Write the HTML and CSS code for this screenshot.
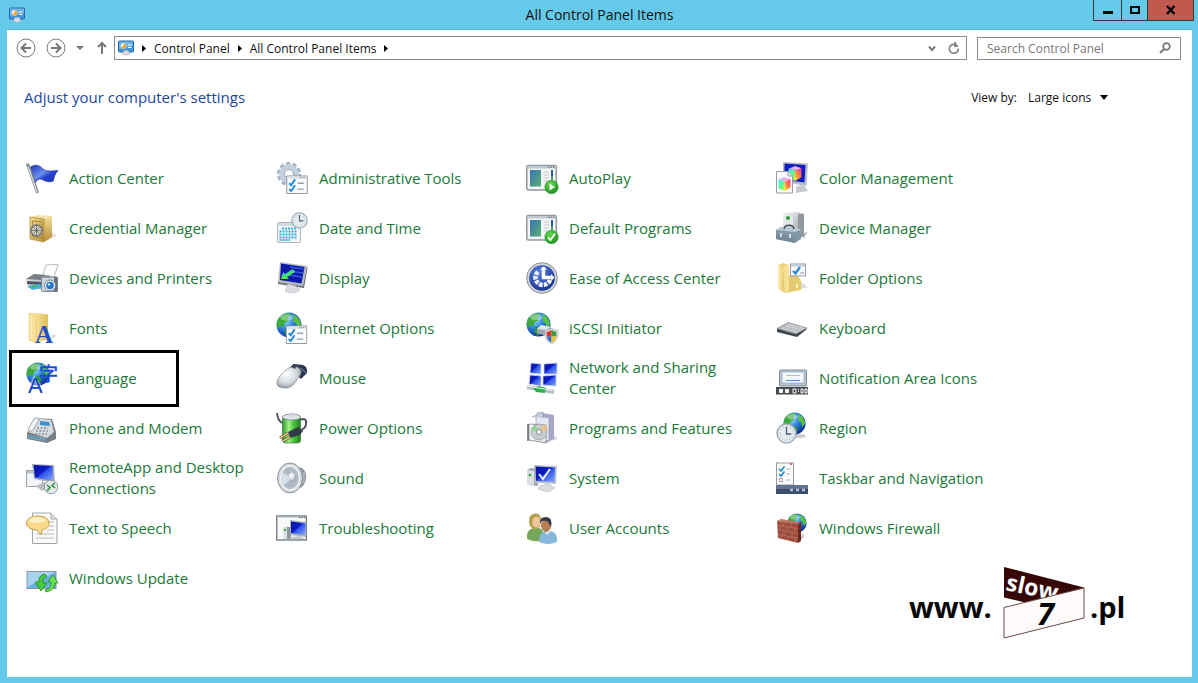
FILE: index.html
```html
<!DOCTYPE html>
<html lang="en">
<head>
<meta charset="utf-8">
<meta name="viewport" content="width=device-width, initial-scale=1">
<title>All Control Panel Items</title>
<link rel="stylesheet" href="styles.css">
</head>
<body>
<svg class="defs" aria-hidden="true">
  <defs>
    <linearGradient id="screen" x1="0" y1="0" x2="1" y2="1"><stop offset="0" stop-color="#0a159c"/><stop offset=".45" stop-color="#0b1cc4"/><stop offset=".5" stop-color="#2c50ea"/><stop offset="1" stop-color="#86a8f8"/></linearGradient>
    <linearGradient id="steel" x1="0" y1="0" x2="1" y2="1"><stop offset="0" stop-color="#f4f6f8"/><stop offset=".5" stop-color="#c3c8ce"/><stop offset="1" stop-color="#7f868e"/></linearGradient>
    <linearGradient id="gold" x1="0" y1="0" x2="1" y2="1"><stop offset="0" stop-color="#f3dc90"/><stop offset="1" stop-color="#b98e32"/></linearGradient>
    <linearGradient id="brass" x1="0" y1="0" x2="0" y2="1"><stop offset="0" stop-color="#f3dc96"/><stop offset="1" stop-color="#b58f3a"/></linearGradient>
    <linearGradient id="manila" x1="0" y1="0" x2="1" y2="0"><stop offset="0" stop-color="#fff0b0"/><stop offset="1" stop-color="#dfc05e"/></linearGradient>
    <linearGradient id="photo" x1="0" y1="0" x2="1" y2="1"><stop offset="0" stop-color="#3b74b4"/><stop offset="1" stop-color="#58b070"/></linearGradient>
    <linearGradient id="flag" x1="0" y1="0" x2="1" y2="1"><stop offset="0" stop-color="#1f37b4"/><stop offset=".45" stop-color="#6d8df0"/><stop offset=".6" stop-color="#2543d2"/><stop offset="1" stop-color="#1c2fa4"/></linearGradient>
    <linearGradient id="cubetop" x1="0" y1="0" x2="1" y2="0"><stop offset="0" stop-color="#c8a0ff"/><stop offset="1" stop-color="#ffc0d8"/></linearGradient>
    <linearGradient id="cubeleft" x1="0" y1="0" x2="1" y2="1"><stop offset="0" stop-color="#40f0ff"/><stop offset=".5" stop-color="#60f890"/><stop offset="1" stop-color="#c8ff30"/></linearGradient>
    <linearGradient id="cuberight" x1="1" y1="0" x2="0" y2="1"><stop offset="0" stop-color="#ff30c0"/><stop offset=".5" stop-color="#ff8040"/><stop offset="1" stop-color="#fff030"/></linearGradient>
    <linearGradient id="cell" x1="0" y1="0" x2="1" y2="0"><stop offset="0" stop-color="#2f9a2c"/><stop offset=".35" stop-color="#a4f08c"/><stop offset=".6" stop-color="#4cc83c"/><stop offset="1" stop-color="#1f7c20"/></linearGradient>
    <radialGradient id="sea" cx=".35" cy=".3" r=".75"><stop offset="0" stop-color="#a8e4ff"/><stop offset=".45" stop-color="#2f86e0"/><stop offset="1" stop-color="#0b2a90"/></radialGradient>
    <radialGradient id="ball" cx=".4" cy=".3" r=".8"><stop offset="0" stop-color="#66d84a"/><stop offset="1" stop-color="#128a1a"/></radialGradient>
    <radialGradient id="navy" cx=".4" cy=".3" r=".8"><stop offset="0" stop-color="#5a80e0"/><stop offset="1" stop-color="#102a88"/></radialGradient>
    <radialGradient id="pearl" cx=".4" cy=".35" r=".7"><stop offset="0" stop-color="#ffffff"/><stop offset=".6" stop-color="#d4d8de"/><stop offset="1" stop-color="#8e949c"/></radialGradient>
    <symbol id="globe" viewBox="0 0 24 24">
      <circle cx="12" cy="12" r="11.5" fill="url(#sea)"/>
      <path d="M3 5C6 2 9 1 12 1L14 3 11 5 12 8 8 10 7 14 4 13 1 15C0 11 1 7 3 5Z" fill="#3faa3c"/>
      <path d="M16 2C20 4 23 8 23 12L20 16 19 11 16 9Z" fill="#55c444"/>
      <path d="M9 14L14 15 15 19 11 23 8 19Z" fill="#2f9638"/>
      <ellipse cx="10" cy="5" rx="6" ry="3" fill="#fff" opacity=".35"/>
    </symbol>
    <symbol id="checklist" viewBox="0 0 22 20">
      <path d="M.5 1.5H21.5V19.5H.5Z" fill="#fbfcfd" stroke="#8f959b"/><path d="M1 2H21V4.500H1Z" fill="#dfe3e8"/>
      <path d="M14 3H20" stroke="#737a84" stroke-dasharray="1 1"/>
      <path d="M11.500 9H18M11.500 15H18" stroke="#9aa2ae" stroke-width="1.500"/>
      <path d="M3 9L5 11 9 5M3 15L5 17 9 11" fill="none" stroke="#2489d0" stroke-width="2"/>
    </symbol>
    <symbol id="appwin" viewBox="0 0 32 32">
      <rect x=".8" y="3.500" width="29.500" height="24.500" rx="1.500" fill="#f4f6f7" stroke="#8f979f" stroke-width="1.500"/>
      <path d="M1.500 4H30V6.500H1.500Z" fill="#c2c9d1"/><path d="M22 5.200H29" stroke="#5b6470" stroke-dasharray="1.500 1"/>
      <rect x="4" y="8" width="11" height="16.500" fill="url(#photo)"/>
      <path d="M17.500 10H23M17.500 13H23M17.500 16H23M17.500 19H23" stroke="#c4c8cc"/>
      <path d="M26 8V18" stroke="#275bb0" stroke-width="2"/><path d="M26 14V18" stroke="#47a070" stroke-width="2"/>
    </symbol>
    <symbol id="clock" viewBox="0 0 20 20">
      <circle cx="10" cy="10" r="9" fill="#e6ebf0" stroke="#a4adb6" stroke-width="1.500"/>
      <circle cx="10" cy="10" r="6.500" fill="none" stroke="#9ba4ad" stroke-dasharray=".8 2.600"/>
      <path d="M10 3.500V10.500H14.500" fill="none" stroke="#4b5f78" stroke-width="1.300"/>
    </symbol>
    <symbol id="cube" viewBox="0 0 12 14">
      <path d="M0 2.500L6 0 12 2 6 4.500Z" fill="url(#cubetop)"/>
      <path d="M0 2.500L6 4.500V14L0 11.500Z" fill="url(#cubeleft)"/>
      <path d="M6 4.500L12 2V10.500L6 14Z" fill="url(#cuberight)"/>
    </symbol>
    <symbol id="cpl" viewBox="0 0 16 16">
      <rect x=".5" y="1" width="15" height="11" rx="1" fill="#4297dc" stroke="#2464a6"/>
      <path d="M1 1.500H15V6L1 9Z" fill="#8fcbf3" opacity=".55"/>
      <circle cx="5.500" cy="6" r="2.700" fill="#fff"/><path d="M5.500 6V3.300A2.700 2.700 0 1 1 3 7Z" fill="#f6a623"/>
      <path d="M10 5H13.500M10 7.500H13.500" stroke="#fff"/>
      <path d="M6 10.500H10L12 14Q8 16.500 4.500 14Z" fill="#d8dde2" stroke="#a2a9b0" stroke-width=".5"/>
    </symbol>
  </defs>
</svg>

<div class="window">
  <header class="titlebar">
    <svg class="app-icon" aria-hidden="true"><use href="#cpl"/></svg>
    <h1 class="window-title">All Control Panel Items</h1>
    <div class="window-controls">
      <button class="ctl ctl-min" type="button" aria-label="Minimize"><svg width="12" height="12" viewBox="0 0 12 12"><path d="M1 8.500H11" stroke="#000" stroke-width="3"/></svg></button>
      <button class="ctl ctl-max" type="button" aria-label="Maximize"><svg width="12" height="12" viewBox="0 0 12 12"><path d="M2 3H10V9H2Z" fill="none" stroke="#000" stroke-width="2"/></svg></button>
      <button class="ctl ctl-close" type="button" aria-label="Close"><svg width="12" height="12" viewBox="0 0 12 12"><path d="M2 2L9.500 10M9.500 2L2 10" stroke="#000" stroke-width="2.400"/></svg></button>
    </div>
  </header>

  <main class="pane">
    <div class="toolbar">
      <button class="round" type="button" aria-label="Back"><svg width="20" height="20" viewBox="0 0 20 20"><circle cx="10" cy="10" r="9" fill="none" stroke="#777"/><path d="M15 10H6M10 5.500L5.500 10 10 14.500" fill="none" stroke="#777" stroke-width="2"/></svg></button>
      <button class="round" type="button" aria-label="Forward"><svg width="20" height="20" viewBox="0 0 20 20"><circle cx="10" cy="10" r="9" fill="none" stroke="#777"/><path d="M5 10H14M10 5.500L14.500 10 10 14.500" fill="none" stroke="#777" stroke-width="2"/></svg></button>
      <button class="recent" type="button" aria-label="Recent locations"><svg width="8" height="4" viewBox="0 0 8 4"><path d="M0 0H8L4 4Z" fill="#777"/></svg></button>
      <button class="up" type="button" aria-label="Up"><svg width="10" height="14" viewBox="0 0 10 14"><path d="M5 13V2M1 6L5 2 9 6" fill="none" stroke="#777" stroke-width="2"/></svg></button>
      <div class="address">
        <svg class="app-icon" aria-hidden="true"><use href="#cpl"/></svg>
        <nav class="crumbs" aria-label="Location">
          <svg class="tri" viewBox="0 0 4 7" aria-hidden="true"><path d="M0 0L4 3.500 0 7Z"/></svg>
          <a href="#">Control Panel</a>
          <svg class="tri" viewBox="0 0 4 7" aria-hidden="true"><path d="M0 0L4 3.500 0 7Z"/></svg>
          <a href="#">All Control Panel Items</a>
          <svg class="tri" viewBox="0 0 4 7" aria-hidden="true"><path d="M0 0L4 3.500 0 7Z"/></svg>
        </nav>
        <button type="button" aria-label="Previous locations"><svg width="8" height="8" viewBox="0 0 8 8"><path d="M1 2.500L4 6 7 2.500" fill="none" stroke="#777" stroke-width="2"/></svg></button>
        <button type="button" aria-label="Refresh"><svg width="12" height="12" viewBox="0 0 12 12"><path d="M10.300 6.500A4.500 4.500 0 1 1 7 2.500" fill="none" stroke="#858585" stroke-width="1.700"/><path d="M6 0H7.500L10.500 5H6Z" fill="#858585"/></svg></button>
      </div>
      <div class="search">
        <input type="search" placeholder="Search Control Panel" aria-label="Search Control Panel">
        <svg width="12" height="12" viewBox="0 0 12 12" aria-hidden="true"><circle cx="7.500" cy="4.500" r="3.300" fill="none" stroke="#777" stroke-width="1.700"/><path d="M5 7L1 11" stroke="#777" stroke-width="2"/></svg>
      </div>
    </div>

    <div class="heading">
      <h2>Adjust your computer's settings</h2>
      <div class="view-by">
        <label for="view">View by:</label>
        <span class="picker">
          <select id="view"><option>Large icons</option></select>
          <svg width="8" height="5" viewBox="0 0 8 5" aria-hidden="true"><path d="M0 0H8L4 5Z"/></svg>
        </span>
      </div>
    </div>

    <ul class="items">
      <li><a href="#"><svg viewBox="0 0 32 32" aria-hidden="true"><path d="M4.500 5C9 2 13 3 16 6 20 10 25 9 32 8.500 29 12 28 15 27.500 19 22 21 19 19 16 17.500 13 16 11 18 9 21Z" fill="url(#flag)" stroke="#1a2b90" stroke-width=".6"/><path d="M2 3L11.500 31" stroke="#777d84" stroke-width="3"/><path d="M1.800 3L11 30.500" stroke="#dde0e3" stroke-width="1.300"/><circle cx="1.800" cy="3" r="1.700" fill="#8a9097"/></svg><span>Action Center</span></a></li>
      <li><a href="#"><svg viewBox="0 0 32 32" aria-hidden="true"><circle cx="13" cy="12" r="10.300" fill="none" stroke="#9fb0c2" stroke-width="3.500" stroke-dasharray="4 2.480"/><circle cx="13" cy="12" r="7.500" fill="none" stroke="#c2cfdd" stroke-width="5"/><circle cx="13" cy="12" r="4.500" fill="#fff" stroke="#8b9cb0"/><use href="#checklist" x="10" y="12.500" width="22" height="19.500"/></svg><span>Administrative Tools</span></a></li>
      <li><a href="#"><svg viewBox="0 0 32 32" aria-hidden="true"><use href="#appwin" width="32" height="32"/><circle cx="25.500" cy="25" r="6.700" fill="url(#ball)" stroke="#37923a" stroke-width=".6"/><path d="M23.500 21.500L29 25 23.500 28.500Z" fill="#fff"/></svg><span>AutoPlay</span></a></li>
      <li><a href="#"><svg viewBox="0 0 32 32" aria-hidden="true"><path d="M7 0L32 1.500 30.500 24 7 20Z" fill="#b9bec6"/><path d="M8.500 1.500L29.500 3 28.500 20.500 8.500 18Z" fill="#0e1cc0"/><path d="M20 25L27 22 32 29 20 31Z" fill="#c8ccd1"/><use href="#cube" x="12" y="4" width="14" height="15"/><path d="M.5 9.500H12L16.500 14V31H.5Z" fill="#fbfbfd" stroke="#989ca4"/><path d="M12 9.500V14H16.500" fill="#dfe1e6" stroke="#989ca4"/><use href="#cube" x="2" y="15" width="13" height="14"/></svg><span>Color Management</span></a></li>

      <li><a href="#"><svg viewBox="0 0 32 32" aria-hidden="true"><path d="M20 29L31 24 26 20Z" fill="#ddd"/><path d="M4 5L12 3 26 4 18 7Z" fill="#f6e4a8"/><path d="M18 7L26 4V25L18 30Z" fill="url(#brass)"/><path d="M4 5L18 7V30L4 27Z" fill="url(#gold)" stroke="#a98638" stroke-width=".7"/><path d="M6.500 9L16 10V26L6.500 24.500Z" fill="none" stroke="#ae8c40"/><circle cx="10.500" cy="18.500" r="5.500" fill="#d6d3c8" stroke="#7f7e7a" stroke-width="1.800"/><path d="M10.500 14V23M6 18.500H15M7.500 15.500L13.500 21.500M13.500 15.500L7.500 21.500" stroke="#77746c" stroke-width=".9"/></svg><span>Credential Manager</span></a></li>
      <li><a href="#"><svg viewBox="0 0 32 32" aria-hidden="true"><rect x="1.500" y="10.500" width="23" height="20" rx="1" fill="#f4f7f9" stroke="#aab2ba"/><path d="M2 11H24V14H2Z" fill="#d3dae1"/><path d="M6 16.500H21M3.500 19.500H21M3.500 22.500H21M3.500 25.500H21M3.500 28H14" stroke="#38add6" stroke-width="2" stroke-dasharray="2 1"/><use href="#clock" x="15" y="0" width="17" height="17"/></svg><span>Date and Time</span></a></li>
      <li><a href="#"><svg viewBox="0 0 32 32" aria-hidden="true"><use href="#appwin" width="32" height="32"/><circle cx="25.500" cy="25" r="6.700" fill="url(#ball)" stroke="#37923a" stroke-width=".6"/><path d="M22 25.500L24.500 28 29 21.500" fill="none" stroke="#fff" stroke-width="1.800"/></svg><span>Default Programs</span></a></li>
      <li><a href="#"><svg viewBox="0 0 32 32" aria-hidden="true"><path d="M24 24L32 19 28 26Z" fill="#bbb"/><path d="M7 1L22 0 28 2V24L20 27 7 22Z" fill="url(#steel)"/><path d="M22 2L28 2V24L22 26Z" fill="#93999f"/><rect x="9" y="4" width="8" height="9" fill="#e4e7e9"/><circle cx="12" cy="6" r="2" fill="#2e9c3a"/><path d="M0 18L5 15H20L25 18V27L19 31 0 27Z" fill="#8398a6"/><path d="M0 18L5 15H20L25 18 19 20Z" fill="#b9c8d2"/><path d="M0 22L19 25V31L0 27Z" fill="#758b99"/><path d="M8 17C9 12 17 12 18 17" fill="none" stroke="#454f58" stroke-width="1.500"/><path d="M5 21V25M14 22V26" stroke="#e2e8ec" stroke-width="1.700"/></svg><span>Device Manager</span></a></li>

      <li><a href="#"><svg viewBox="0 0 32 32" aria-hidden="true"><path d="M17 13L20 3 32 2.500 28 15Z" fill="#fff" stroke="#a5a9ae" stroke-width=".8"/><path d="M0 17L8 12 20 13V27L2 26Z" fill="url(#steel)"/><path d="M0 17L8 12 20 13 15 18Z" fill="#767d85"/><path d="M1 19L15 20V23L1 22Z" fill="#4d545c"/><path d="M2 24L14 22 16 26 6 28Z" fill="#3fb0d8"/><path d="M4 25L10 23 11 26Z" fill="#4db860"/><rect x="15.500" y="15" width="16" height="14.500" rx="1.500" fill="#cfd5da" stroke="#7f8890"/><path d="M28 15H31.500V30H28Z" fill="#69727c"/><path d="M18 13.500H24V16H18Z" fill="#8b949c"/><circle cx="24" cy="23.500" r="5.500" fill="#e6ecf2" stroke="#7b8692"/><circle cx="24" cy="23.500" r="3.700" fill="#1d74cc"/><circle cx="23" cy="22.500" r="1.200" fill="#c2eaff"/></svg><span>Devices and Printers</span></a></li>
      <li><a href="#"><svg viewBox="0 0 32 32" aria-hidden="true"><path d="M4 0L31 4 27 24 2 20Z" fill="#b6bac0"/><path d="M5 1.500L28.500 5 25.500 21.500 4 18Z" fill="#0c18a8"/><path d="M14 5L27.500 7M13 9L27 11M12 13L26 15" stroke="#315ce0" stroke-width="1.500"/><path d="M2 20L27 24 31 4 31.500 6 28 26 2 22Z" fill="#6b717a"/><path d="M12 22L20 24 24 28Q17 33 9 29Z" fill="#d9dce0" stroke="#b4b8bd" stroke-width=".6"/><path d="M5 17L7 10 9 12 17 7 19 10 11 15 13 17Z" fill="#48e070"/></svg><span>Display</span></a></li>
      <li><a href="#"><svg viewBox="0 0 32 32" aria-hidden="true"><circle cx="16" cy="16" r="15.300" fill="#d0d3d8" stroke="#8a8f98"/><circle cx="16" cy="16" r="12.800" fill="url(#navy)"/><path d="M24 18A7.500 7.500 0 1 1 12 9.800" fill="none" stroke="#f2f6ff" stroke-width="4.500" stroke-dasharray="3.500 1.200"/><path d="M17.500 5V15.500M16 15.500H27" stroke="#fff" stroke-width="3.500"/><path d="M14 8L17.500 4.500 21 8ZM25 12L28.500 15.500 25 19Z" fill="#fff"/></svg><span>Ease of Access Center</span></a></li>
      <li><a href="#"><svg viewBox="0 0 32 32" aria-hidden="true"><path d="M14 30L32 25 25 20Z" fill="#ddd"/><path d="M2 3L8 1 13 4V29L2 27Z" fill="#ecd17c"/><path d="M12 14H21Q25 17 25 20V28L10 31Z" fill="#e6ca72"/><path d="M21 22V26" stroke="#fff4c0" stroke-width="2"/><path d="M2 3L7 5 9 31 2 27Z" fill="url(#manila)"/><path d="M7 5L13 2V28L9 31Z" fill="#f5e096"/><rect x="14.500" y="2" width="15" height="12" fill="#f8fafb" stroke="#929ba6"/><path d="M15 3.500H29" stroke="#c1cbd5" stroke-width="2"/><path d="M17 9L19.500 11.500 24 5" fill="none" stroke="#2489d0" stroke-width="2.200"/><path d="M24 11H28" stroke="#8b93a0"/></svg><span>Folder Options</span></a></li>

      <li><a href="#"><svg viewBox="0 0 32 32" aria-hidden="true"><path d="M3 1H10L22 2.500V27L10 31 3 28Z" fill="url(#manila)"/><path d="M3 1L10 5V31L3 28Z" fill="#f6e196" stroke="#d8bc66" stroke-width=".5"/><path d="M5 4V27" stroke="#fff" opacity=".6"/><path d="M24 28L31 24 27 22Z" fill="#ddd"/><text x="9" y="31" class="glyph-serif">A</text></svg><span>Fonts</span></a></li>
      <li><a href="#"><svg viewBox="0 0 32 32" aria-hidden="true"><use href="#globe" x="0" y="0" width="26" height="26"/><use href="#checklist" x="9.500" y="12.500" width="22" height="19.500"/></svg><span>Internet Options</span></a></li>
      <li><a href="#"><svg viewBox="0 0 32 32" aria-hidden="true"><use href="#globe" x="0" y="0" width="25" height="25"/><path d="M11 17L15 13 25 15V22L20 24 11 21Z" fill="#9ca6b0"/><path d="M11 17L15 13 25 15 20 18Z" fill="#e0e5e9"/><path d="M19 18.500Q23 18 25.500 16.500 28 18 32 18.500 33 28 25.500 32 18 28 19 18.500Z" fill="#e0e3e6" stroke="#9fa6ac" stroke-width=".7"/><path d="M20.500 20Q23 19.500 25.500 18V24.500H20.800Z" fill="#d8342a"/><path d="M25.500 18Q28 19.500 30.500 20L30.200 24.500H25.500Z" fill="#3b9e40"/><path d="M20.800 24.500H25.500V30.500Q21.500 28.500 20.800 24.500Z" fill="#2e6ccc"/><path d="M25.500 24.500H30.200Q29.500 28.500 25.500 30.500Z" fill="#f2c11c"/></svg><span>iSCSI Initiator</span></a></li>
      <li><a href="#"><svg viewBox="0 0 32 32" aria-hidden="true"><path d="M1 17L12 11 31 17 21 25 1 20Z" fill="#3f454c"/><path d="M1 16.500L12 10.500 31 16 20 22Z" fill="#b9bcc0" stroke="#85898e" stroke-width=".7"/><path d="M6 16L22 20M10 14L26 18M12 12.500L28 16.500" stroke="#e2e4e6" stroke-dasharray="2 1"/></svg><span>Keyboard</span></a></li>

      <li class="marked"><a href="#"><svg viewBox="0 0 32 32" aria-hidden="true"><use href="#globe" x="0" y="0" width="24" height="24"/><path d="M2 25L8 13 15 22V27Z" fill="#fff" opacity=".45"/><text x="13" y="19" class="glyph-cjk">字</text><text x="2" y="31" class="glyph-sans">A</text></svg><span>Language</span></a></li>
      <li><a href="#"><svg viewBox="0 0 32 32" aria-hidden="true"><path d="M13 6L18 2 27 3Q32 5 31 11L25 17Z" fill="#2f3754"/><path d="M25 6L30 11" stroke="#858ca6"/><path d="M1 20C2 14 10 7 15 5 20 3 28 7 24 13 20 19 17 26 10 26 5 26 0 25 1 20Z" fill="url(#pearl)" stroke="#858a92" stroke-width=".7"/><path d="M15 5L17 2 21 3 19 7Z" fill="#40465a"/></svg><span>Mouse</span></a></li>
      <li><a href="#"><svg viewBox="0 0 32 32" aria-hidden="true"><g fill="url(#screen)" stroke="#c9d2ee" stroke-width=".8"><path d="M5 1L15 2V12L4 11Z"/><path d="M18 2L31 1V12L18 12Z"/><path d="M4 13L15 14V24L3 22Z"/><path d="M17 14L30 13V24L17 23Z"/></g><path d="M1 25L28 30" stroke="#b7bfc4" stroke-width="4"/><path d="M7 26L13 24 20 26 19 31 10 30Z" fill="#2ead4d"/><path d="M1 24L26 28.500" stroke="#edf0f1" stroke-width="1.200"/></svg><span>Network and Sharing Center</span></a></li>
      <li><a href="#"><svg viewBox="0 0 32 32" aria-hidden="true"><rect x="3.500" y="8" width="27" height="16" rx="1" fill="#bac5cf" stroke="#828c96"/><rect x="6" y="10" width="22" height="11" fill="#f5f8fb" stroke="#74a0cc" stroke-width=".6"/><path d="M10 13.500H24" stroke="#b4bcc4"/><path d="M10 18.500H24" stroke="#4c90d8"/><path d="M0 25H32V32.500H0Z" fill="#474b51"/><path d="M3 27H7V31H3ZM9 27H13V31H9Z" fill="#f4f4f4"/><path d="M17 27H20V31H17ZM25 27H27V31H25ZM29 27H31V31H29Z" fill="none" stroke="#fff"/><path d="M22.500 27V31" stroke="#fff" stroke-dasharray="1 1"/></svg><span>Notification Area Icons</span></a></li>

      <li><a href="#"><svg viewBox="0 0 32 32" aria-hidden="true"><path d="M1 21L9 6 26 7 30 20V27L21 31 1 27Z" fill="#767e86"/><path d="M2 20L10 6 25 8 28 20 21 26Z" fill="#d7dbdf"/><path d="M14 9L23 10 24 14 14 13Z" fill="#3a92d4"/><path d="M11 16H22M10 19H22M9 22H21" stroke="#8b949d" stroke-width="1.500" stroke-dasharray="2 1.500"/><path d="M8 7Q12 4 13 8L7 18Q4 21 2 17Z" fill="#f2f3f5" stroke="#8b9299" stroke-width=".8"/><path d="M2 23L19 26V29L2 26Z" fill="#79b6d6"/><path d="M3 24.500L18 27.500" stroke="#3e5668" stroke-dasharray="1.500 1"/></svg><span>Phone and Modem</span></a></li>
      <li><a href="#"><svg viewBox="0 0 32 32" aria-hidden="true"><path d="M1 1Q2 10 7 11M24 8Q31 5 30 12 30 17 21 20" fill="none" stroke="#4d5468" stroke-width="2"/><rect x="6.500" y="4" width="18" height="27" rx="3" fill="url(#cell)" stroke="#397a3b" stroke-width=".7"/><ellipse cx="15.500" cy="5" rx="9" ry="3" fill="#e2e7ea" stroke="#89939b"/><ellipse cx="15.500" cy="2.500" rx="3.500" ry="2" fill="#cfd5da"/><path d="M12 20L22 15 27 19 24 23 14 26Z" fill="#343a46"/><path d="M12 21L4 26M14 25L7 29" stroke="#5d461e" stroke-width="2.700"/><path d="M12 21L4 26M14 25L7 29" stroke="#e5c98a" stroke-width="1.500"/></svg><span>Power Options</span></a></li>
      <li><a href="#"><svg viewBox="0 0 32 32" aria-hidden="true"><path d="M26 29L32 27 29 23Z" fill="#ddd"/><path d="M10 3L17 1 28 3V27L20 31 10 28Z" fill="#a6a8ca"/><path d="M10 3L23 6V29L10 27Z" fill="#e6e8f4" stroke="#9598b5" stroke-width=".7"/><path d="M6 5L11 3V1L17 0V6" fill="#c8cadd" stroke="#8c90a8" stroke-width=".6"/><path d="M3 12L20 13V31L3 28Z" fill="#f4f5f8" opacity=".85" stroke="#85888f"/><circle cx="13" cy="20" r="8" fill="#c9ccd2" stroke="#8b9096" stroke-width=".6"/><path d="M13 20L18 12A9 9 0 0 1 21 18Z" fill="#efc384"/><path d="M13 20L5 18A8 8 0 0 1 9 13Z" fill="#91d696"/><circle cx="13" cy="20" r="2.500" fill="#fff" stroke="#888"/><path d="M2 12V29" stroke="#63666b" stroke-width="1.500"/></svg><span>Programs and Features</span></a></li>
      <li><a href="#"><svg viewBox="0 0 32 32" aria-hidden="true"><ellipse cx="21" cy="24" rx="9" ry="2" fill="#ccc"/><use href="#globe" x="7" y="0" width="23" height="23"/><use href="#clock" x="0" y="11" width="21" height="21"/></svg><span>Region</span></a></li>

      <li><a href="#"><svg viewBox="0 0 32 32" aria-hidden="true"><rect x=".5" y="8.500" width="16" height="16" fill="#f3f4f5" stroke="#9ba1a7"/><path d="M1 9H16V11.500H1Z" fill="#b8c1cb"/><path d="M6 2L28 3 29 21 8 17Z" fill="#aab0b8"/><path d="M7.500 3L26.500 4 27 19 9 15.500Z" fill="url(#screen)"/><path d="M10 24L18 20 23 25 16 29Z" fill="#b9bdc2"/><circle cx="25" cy="25" r="6.800" fill="#e3e7e9" stroke="#92999f"/><path d="M21 23L24 25.500 21 29M29 21L26 23.500 29 26" fill="none" stroke="#2f9140" stroke-width="1.600"/></svg><span>RemoteApp and Desktop Connections</span></a></li>
      <li><a href="#"><svg viewBox="0 0 32 32" aria-hidden="true"><path d="M20 5L26 6Q31 10 30 16 30 21 26 25L19 28Z" fill="#8c939b"/><path d="M25 8V24M28 10V22" stroke="#c8ced4"/><ellipse cx="14" cy="16" rx="12.500" ry="15" fill="#d3d8dd" stroke="#8b939b"/><ellipse cx="14" cy="16" rx="9.500" ry="12" fill="#aebac6" stroke="#f0f2f4" stroke-width="1.500"/><path d="M6 10L16 16 7 24Q4 17 6 10Z" fill="#d7dfe6"/><ellipse cx="16" cy="15" rx="3.500" ry="4.500" fill="url(#pearl)"/></svg><span>Sound</span></a></li>
      <li><a href="#"><svg viewBox="0 0 32 32" aria-hidden="true"><path d="M1 8L5 6 12 7V24L3 23Z" fill="#9ea5ac"/><path d="M1 8L8 9V24L1 22Z" fill="#dce0e3"/><circle cx="4" cy="13" r="1.500" fill="#3cac46"/><path d="M8 3L31 4 30 22 9 21Z" fill="#bec4ca"/><path d="M9.500 4.500L29 5.500 28.500 20 10 19Z" fill="url(#screen)"/><path d="M14 24L22 22 29 26 22 30 12 27Z" fill="#dadde0" stroke="#b0b5ba" stroke-width=".6"/><path d="M13 12L17 17 24 7" fill="none" stroke="#e9f0ff" stroke-width="2"/></svg><span>System</span></a></li>
      <li><a href="#"><svg viewBox="0 0 32 32" aria-hidden="true"><rect x=".5" y="1" width="17" height="22" fill="#fbfbfc" stroke="#989da3"/><path d="M3 7L5 9 8.500 4.500M3 12L5 14 8.500 9.500" fill="none" stroke="#2489d0" stroke-width="1.700"/><rect x="3.500" y="16.500" width="3" height="3" fill="#fff" stroke="#aaa"/><path d="M10.500 7H14M10.500 12H14M10.500 18H14" stroke="#a6abb3"/><path d="M15 1V3" stroke="#d66" stroke-width="2"/><path d="M0 23H32V32H0Z" fill="#3b4c6c"/><path d="M0 23H32V27H0Z" fill="#607393"/><path d="M14 28H17M20 28H23M26 28H29" stroke="#b6c1d2" stroke-width="2.500"/></svg><span>Taskbar and Navigation</span></a></li>

      <li><a href="#"><svg viewBox="0 0 32 32" aria-hidden="true"><path d="M6.500 1H25L31 7V31.500H6.500Z" fill="#f9fafa" stroke="#a2a5a9"/><path d="M25 1V7H31" fill="#dfe2e5" stroke="#a2a5a9"/><path d="M21 10H28M23 14H28M21 18H28M10 22H28M10 26H28" stroke="#b7babd"/><path d="M12 4C19 4 23 7 23 11 23 15 20 17 16 18L15 23 11 18C5 18 .5 15 .5 11 .5 7 5 4 12 4Z" fill="#f9d98b" stroke="#c59a48"/><ellipse cx="11" cy="8" rx="8" ry="3" fill="#fff0c4"/></svg><span>Text to Speech</span></a></li>
      <li><a href="#"><svg viewBox="0 0 32 32" aria-hidden="true"><rect x=".8" y="4" width="29.500" height="24" fill="#f9fafa" stroke="#7e858c" stroke-width="1.500"/><path d="M1.500 5H29.500" stroke="#aeb5bd"/><path d="M23 5.500H29" stroke="#555" stroke-dasharray="1.500 1"/><path d="M7 15L11 14 15 16V27H7Z" fill="#dfe2e5"/><path d="M11 15H15V27H11Z" fill="#8e959c"/><circle cx="9" cy="18" r="1.300" fill="#41ae47"/><path d="M14 8L29.500 10V25L14 23Z" fill="#abb2bc"/><path d="M15 9.500L29.500 11.500V23L15 21Z" fill="url(#screen)"/><path d="M15 25L23 24 29 27H13Z" fill="#c3c7cb"/></svg><span>Troubleshooting</span></a></li>
      <li><a href="#"><svg viewBox="0 0 32 32" aria-hidden="true"><path d="M1 27Q0 18 7 16H13Q19 18 18 28 9 31 1 27Z" fill="#76a85c"/><path d="M4 14Q1 4 7 2 14 0 15 7L14 15 8 18Z" fill="#b3a04e"/><ellipse cx="10.500" cy="10" rx="4.200" ry="5.500" fill="#f0c49a"/><path d="M13 30Q13 21 19 19H25Q32 21 31 30 22 34 13 30Z" fill="#86b8dc"/><path d="M18 19L21 23 25 19Z" fill="#dcebf5"/><ellipse cx="20" cy="13.500" rx="5" ry="6.500" fill="#b77d53"/><path d="M14 12Q13 5 20 5 27 5 25 15L23 12Q22 8 16 9Z" fill="#383b44"/></svg><span>User Accounts</span></a></li>
      <li><a href="#"><svg viewBox="0 0 32 32" aria-hidden="true"><path d="M23 29L28 25 27 21Z" fill="#bbb"/><use href="#globe" x="11" y="1" width="20" height="20"/><path d="M1 9L5 7 25 10 21 12Z" fill="#bb7865"/><path d="M1 9L22 12V31L2 26Z" fill="#9e4c3c"/><path d="M22 12L25 10V29L22 31Z" fill="#692b21"/><path d="M1 13L22 16.500M1.500 17.500L22 21.500M2 22L22 26.500M7 10V14M15 11V15M4 14V18M11 15V19M19 16V20M8 19V23M16 21V25M5 23V27M12 24V28M19 26V30" stroke="#c08474" stroke-width=".6"/></svg><span>Windows Firewall</span></a></li>

      <li><a href="#"><svg viewBox="0 0 32 32" aria-hidden="true"><rect x="1" y="9.500" width="29" height="17" fill="#6aaedb" stroke="#87949f"/><path d="M1.500 10H29L1.500 25Z" fill="#a7d3ee"/><path d="M18 12Q12 14 13 20H9L15 29 21 21H17Q16 16 21 14Z" fill="#45c83b" stroke="#198a20" stroke-width=".8"/><path d="M19 28Q26 27 25 20H22L27 13 32 21H29Q29 28 20 30Z" fill="#6fe252" stroke="#198a20" stroke-width=".8"/></svg><span>Windows Update</span></a></li>
    </ul>

    <svg class="brand" width="220" height="74" viewBox="0 0 220 74" role="img" aria-label="www.slow7.pl">
      <text x="1" y="52" class="brand-url">www.</text>
      <path d="M96 1L176 21.500 176 23 117 36.500 96 31.500Z" fill="#350706"/>
      <text class="brand-slow" transform="translate(97 24) rotate(12)">slow</text>
      <path d="M96 41.500L176 22V52L96 72Z" fill="#fffbfb" stroke="#6a4a4a"/>
      <text x="129" y="59" class="brand-seven">7</text>
      <text x="182" y="52" class="brand-url">.pl</text>
    </svg>
  </main>
</div>
</body>
</html>
```
FILE: styles.css
```css
* { box-sizing: border-box; }

body {
  margin: 0;
  font-family: "Open Sans", "Noto Sans", sans-serif;
  font-size: 15px;
  color: #111;
  background: #65c9ea;
}

button {
  display: flex;
  align-items: center;
  justify-content: center;
  padding: 0;
  border: 0;
  background: none;
}

a { color: inherit; text-decoration: none; }

.defs { position: absolute; width: 0; height: 0; }

.window {
  display: flex;
  flex-direction: column;
  min-height: 100vh;
  padding: 0 6px 6px 7px;
}

/* Title bar */
.titlebar {
  display: grid;
  grid-template-columns: 1fr auto 1fr;
  align-items: center;
  height: 29px;
}

.app-icon { width: 16px; height: 16px; flex: none; }
.titlebar .app-icon { margin-left: 2px; }

.window-title {
  margin: 0;
  font-size: 14px;
  font-weight: 400;
  line-height: 20px;
}

.window-controls {
  display: flex;
  justify-self: end;
  align-self: start;
  margin-right: -2px;
}

.ctl {
  height: 21px;
  border: 1px solid #343c40;
  border-top: 0;
}
.ctl + .ctl { border-left: 0; }
.ctl-min { width: 29px; }
.ctl-max { width: 26px; }
.ctl-close { width: 46px; background: #c2594f; }

/* Content pane */
.pane {
  position: relative;
  flex: 1;
  background: #fff;
  border-top: 1px solid #5fb4d0;
}

.toolbar {
  display: flex;
  align-items: center;
  padding: 6px 11px 0 9px;
  font-size: 12px;
}
.round { margin-right: 10px; }
.recent { width: 8px; }
.up { margin: 0 7px 0 13px; }

.address {
  display: flex;
  flex: 1;
  align-items: center;
  gap: 12px;
  height: 24px;
  margin-right: 10px;
  padding: 0 6px 0 3px;
  border: 1px solid #8a8a8a;
}
.address .app-icon { margin-right: -4px; }

.crumbs {
  display: flex;
  flex: 1;
  align-items: center;
  gap: 8px;
}
.tri { width: 4px; height: 7px; }

.search {
  display: flex;
  align-items: center;
  width: 204px;
  height: 23px;
  padding: 0 9px;
  border: 1px solid #8a8a8a;
}
.search input {
  flex: 1;
  min-width: 0;
  padding: 0;
  border: 0;
  outline: 0;
  background: none;
  font: inherit;
}
.search input::placeholder { color: #777; opacity: 1; }

.heading {
  display: flex;
  justify-content: space-between;
  align-items: center;
  margin: 25px 84px 44px 17px;
}
.heading h2 {
  margin: 0;
  font-size: 15px;
  font-weight: 400;
  line-height: 24px;
  color: #1c479f;
}

.view-by {
  display: flex;
  align-items: center;
  gap: 11px;
  font-size: 12px;
}
.picker { position: relative; display: flex; align-items: center; }
.picker select {
  appearance: none;
  padding: 0 16px 0 0;
  border: 0;
  background: none;
  font: inherit;
  color: inherit;
}
.picker svg { position: absolute; right: 0; pointer-events: none; }

/* Item grid */
.items {
  display: grid;
  grid-template-columns: repeat(auto-fill, 250px);
  grid-auto-rows: 50px;
  margin: 0;
  padding: 0 0 0 19px;
  list-style: none;
  line-height: 21px;
  color: #20793a;
}
.items li { position: relative; display: flex; align-items: center; }
.items a {
  display: flex;
  align-items: center;
  gap: 11px;
  max-width: 233px;
}
.items svg { width: 32px; height: 32px; flex: none; overflow: visible; }

.marked::after {
  content: "";
  box-sizing: border-box;
  position: absolute;
  top: -3px;
  bottom: -4px;
  left: -17px;
  width: 170px;
  border: 3px solid #000;
  pointer-events: none;
}

.glyph-serif { font: bold 25px "Liberation Serif", serif; fill: #1f4fc4; }
.glyph-sans { font: 22px "Liberation Sans", sans-serif; fill: #1040cc; }
.glyph-cjk { font: 19px "Noto Sans CJK JP", sans-serif; fill: #1446d8; stroke: #1446d8; stroke-width: 0.5px; }

/* Site mark over the lower right corner */
.brand { position: absolute; right: 64px; bottom: 37px; }
.brand-url { font: bold 29px "Open Sans", sans-serif; fill: #080808; }
.brand-slow { font: bold 23px "Open Sans", sans-serif; fill: #fff; }
.brand-seven { font: italic bold 31px "Open Sans", sans-serif; fill: #080808; }
```
